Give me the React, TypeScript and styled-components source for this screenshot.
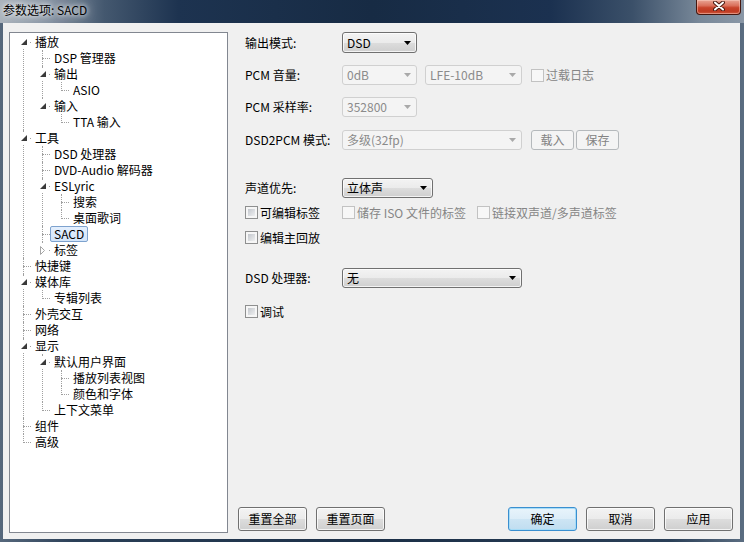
import React from 'react';
import styled, { createGlobalStyle, css } from 'styled-components';

const FONT = `"Noto Sans CJK SC", "Liberation Sans", sans-serif`;

const GlobalStyle = createGlobalStyle`
  html, body { margin: 0; padding: 0; width: 744px; height: 542px; overflow: hidden; }
  body { font-family: ${FONT}; font-size: 12px; }
  * { box-sizing: border-box; }
`;

const Window = styled.div`
  width: 744px;
  height: 542px;
  display: flex;
  flex-direction: column;
  background: linear-gradient(90deg, #56687c 0%, #2a3f57 10%, #1b2f47 50%, #2a3f57 90%, #5b6d81 100%);
`;

const TitleBar = styled.div`
  height: 23px;
  flex: none;
  display: flex;
  justify-content: space-between;
  align-items: flex-start;
  padding: 0 3px;
  background: linear-gradient(90deg, #a9b2bb 0%, #8390a0 7%, #44586f 14%, #1d3350 24%, #172b44 50%, #1b3150 74%, #3b5069 85%, #788899 94%, #8a97a6 100%);
`;

const Title = styled.span`
  font: 12px/19px ${FONT};
  color: #000;
  text-shadow: 0 0 4px rgba(255, 255, 255, 0.95), 0 0 8px rgba(255, 255, 255, 0.8), 0 0 14px rgba(255, 255, 255, 0.6);
`;

const CloseButton = styled.div`
  width: 45px;
  height: 15px;
  border: 1px solid #45170f;
  border-top: none;
  border-radius: 0 0 4px 4px;
  background: linear-gradient(#e9a595 0%, #da705c 40%, #c8442c 55%, #bf3a22 80%, #d05b40 100%);
  box-shadow: inset 0 0 0 1px rgba(255, 215, 205, 0.45);
  display: flex;
  justify-content: center;
  padding-top: 1px;
`;

const Client = styled.div`
  flex: 1;
  margin: 0 4px 3px 3px;
  background: #f0f0f0;
  display: flex;
  gap: 10px;
  padding: 9px 7px 6px 6px;
`;

/* ---------------- Tree ---------------- */

const TreeBox = styled.div`
  width: 219px;
  flex: none;
  border: 1px solid #828790;
  background: #fff;
  padding-top: 1px;
  font: 12px/16px ${FONT};
  color: #000;
  overflow: hidden;
`;

const List = styled.ul<{ $root?: boolean }>`
  list-style: none;
  margin: 0;
  padding: 0 0 0 ${(p) => (p.$root ? 0 : 19)}px;
`;

const Item = styled.li<{ $first?: boolean; $last?: boolean }>`
  position: relative;
  &::before {
    content: '';
    position: absolute;
    left: 13px;
    width: 0;
    top: ${(p) => (p.$first ? 8 : 0)}px;
    ${(p) => (p.$last ? css`height: ${p.$first ? 1 : 9}px;` : css`bottom: 0;`)}
    border-left: 1px dotted #a0a0a0;
  }
`;

const Row = styled.div`
  position: relative;
  height: 16px;
  display: flex;
  align-items: center;
  padding-left: 21px;
  white-space: nowrap;
  &::after {
    content: '';
    position: absolute;
    left: 13px;
    top: 8px;
    width: 8px;
    border-top: 1px dotted #a0a0a0;
  }
`;

const Expander = styled.span`
  position: absolute;
  left: 8px;
  top: 2px;
  width: 11px;
  height: 12px;
  background: #fff;
  z-index: 1;
  display: flex;
  align-items: center;
  justify-content: center;
`;

const NodeLabel = styled.span<{ $selected?: boolean }>`
  height: 16px;
  padding: 0 3px;
  border: 1px solid transparent;
  border-radius: 2px;
  line-height: 14px;
  ${(p) =>
    p.$selected &&
    css`
      border-color: #7da2ce;
      background: linear-gradient(#e4effd, #d3e5fa);
    `}
`;

type TreeNode = { label: string; children?: TreeNode[]; selected?: boolean; collapsed?: boolean };

const treeData: TreeNode[] = [
  {
    label: '播放',
    children: [
      { label: 'DSP 管理器' },
      { label: '输出', children: [{ label: 'ASIO' }] },
      { label: '输入', children: [{ label: 'TTA 输入' }] },
    ],
  },
  {
    label: '工具',
    children: [
      { label: 'DSD 处理器' },
      { label: 'DVD-Audio 解码器' },
      { label: 'ESLyric', children: [{ label: '搜索' }, { label: '桌面歌词' }] },
      { label: 'SACD', selected: true },
      { label: '标签', collapsed: true },
    ],
  },
  { label: '快捷键' },
  { label: '媒体库', children: [{ label: '专辑列表' }] },
  { label: '外壳交互' },
  { label: '网络' },
  {
    label: '显示',
    children: [
      { label: '默认用户界面', children: [{ label: '播放列表视图' }, { label: '颜色和字体' }] },
      { label: '上下文菜单' },
    ],
  },
  { label: '组件' },
  { label: '高级' },
];

const ExpandedGlyph = () => (
  <svg width="6" height="6" viewBox="0 0 6 6">
    <path d="M6 0 L6 6 L0 6 Z" fill="#3a3a3a" />
  </svg>
);

const CollapsedGlyph = () => (
  <svg width="5" height="9" viewBox="0 0 5 9">
    <path d="M0.5 0.5 L4.5 4.5 L0.5 8.5 Z" fill="#fff" stroke="#a6a6a6" strokeWidth="1" />
  </svg>
);

function TreeNodes({ nodes, root }: { nodes: TreeNode[]; root?: boolean }) {
  return (
    <List $root={root}>
      {nodes.map((n, i) => (
        <Item key={n.label} $first={root && i === 0} $last={i === nodes.length - 1}>
          <Row>
            {(n.children || n.collapsed) && (
              <Expander>{n.collapsed ? <CollapsedGlyph /> : <ExpandedGlyph />}</Expander>
            )}
            <NodeLabel $selected={n.selected}>{n.label}</NodeLabel>
          </Row>
          {n.children && <TreeNodes nodes={n.children} />}
        </Item>
      ))}
    </List>
  );
}

/* ---------------- Page ---------------- */

const Page = styled.div`
  flex: 1;
  display: flex;
  flex-direction: column;
  padding-bottom: 2px;
  font: 12px ${FONT};
  color: #000;
`;

const Form = styled.div`
  display: flex;
  flex-direction: column;
  padding-left: 7px;
`;

const FormRow = styled.div<{ $mt: number; $h: number }>`
  display: flex;
  align-items: center;
  height: ${(p) => p.$h}px;
  margin-top: ${(p) => p.$mt}px;
  white-space: nowrap;
`;

const FieldLabel = styled.span`
  width: 97px;
  flex: none;
  line-height: 16px;
`;

const Select = styled.div<{ $w: number; $disabled?: boolean; $ml?: number }>`
  width: ${(p) => p.$w}px;
  height: 100%;
  flex: none;
  margin-left: ${(p) => p.$ml ?? 0}px;
  display: flex;
  align-items: center;
  justify-content: space-between;
  padding: 0 5px 0 4px;
  border-radius: 3px;
  line-height: 16px;
  ${(p) =>
    p.$disabled
      ? css`
          border: 1px solid #d0d0d0;
          background: #f4f4f4;
          color: #8b8b8b;
        `
      : css`
          border: 1px solid #707070;
          background: linear-gradient(#f3f3f3 0%, #ebebeb 50%, #dddddd 50%, #cfcfcf 100%);
          box-shadow: inset 0 0 0 1px rgba(255, 255, 255, 0.75);
          color: #000;
        `}
`;

const Arrow = ({ disabled }: { disabled?: boolean }) => (
  <svg width="7" height="4" viewBox="0 0 7 4">
    <path d="M0 0 L7 0 L3.5 4 Z" fill={disabled ? '#a9a9a9' : '#000'} />
  </svg>
);

const SmallButton = styled.div<{ $ml: number }>`
  width: 43px;
  height: 100%;
  flex: none;
  margin-left: ${(p) => p.$ml}px;
  display: flex;
  align-items: center;
  justify-content: center;
  border: 1px solid #b5b9bc;
  border-radius: 3px;
  background: #f4f4f4;
  color: #838383;
  line-height: 16px;
`;

const Check = styled.label<{ $w?: number; $ml?: number; $disabled?: boolean }>`
  display: flex;
  align-items: center;
  gap: 2px;
  flex: none;
  ${(p) => p.$w !== undefined && css`width: ${p.$w}px;`}
  margin-left: ${(p) => p.$ml ?? 0}px;
  line-height: 16px;
  color: ${(p) => (p.$disabled ? '#858585' : '#000')};
`;

const Box = styled.span<{ $disabled?: boolean }>`
  width: 13px;
  height: 13px;
  flex: none;
  padding: 2px;
  ${(p) =>
    p.$disabled
      ? css`
          border: 1px solid #c2c2c2;
          background: #f7f7f7;
        `
      : css`
          border: 1px solid #8e8f8f;
          background: linear-gradient(135deg, #c3c7cd, #eeeff0) content-box, linear-gradient(#f6f6f6, #f6f6f6) padding-box;
        `}
`;

const ButtonBar = styled.div`
  margin-top: auto;
  display: flex;
  gap: 9px;
  height: 24px;
`;

const Spacer = styled.div`
  flex: 1;
`;

const Button = styled.div<{ $default?: boolean }>`
  width: 69px;
  height: 24px;
  flex: none;
  display: flex;
  align-items: center;
  justify-content: center;
  border-radius: 3px;
  line-height: 16px;
  color: #000;
  ${(p) =>
    p.$default
      ? css`
          border: 1px solid #3a8fd0;
          background: linear-gradient(#e8f4fb 0%, #dcedf8 50%, #cde5f4 50%, #c0ddf0 100%);
          box-shadow: inset 0 0 0 1px #a6dcf7;
        `
      : css`
          border: 1px solid #707070;
          background: linear-gradient(#f3f3f3 0%, #ebebeb 50%, #dddddd 50%, #cfcfcf 100%);
          box-shadow: inset 0 0 0 1px rgba(255, 255, 255, 0.75);
        `}
`;

export default function App() {
  return (
    <>
      <GlobalStyle />
      <Window>
        <TitleBar>
          <Title>参数选项: SACD</Title>
          <CloseButton>
            <svg width="12" height="10" viewBox="0 0 12 10">
              <path d="M2 1.5 L10 8.5 M10 1.5 L2 8.5" stroke="#4a1a12" strokeWidth="4" strokeLinecap="round" />
              <path d="M2 1.5 L10 8.5 M10 1.5 L2 8.5" stroke="#fff" strokeWidth="2" strokeLinecap="round" />
            </svg>
          </CloseButton>
        </TitleBar>
        <Client>
          <TreeBox>
            <TreeNodes nodes={treeData} root />
          </TreeBox>
          <Page>
            <Form>
              <FormRow $mt={0} $h={21}>
                <FieldLabel>输出模式:</FieldLabel>
                <Select $w={75}>
                  <span>DSD</span>
                  <Arrow />
                </Select>
              </FormRow>
              <FormRow $mt={12} $h={20}>
                <FieldLabel>PCM 音量:</FieldLabel>
                <Select $w={75} $disabled>
                  <span>0dB</span>
                  <Arrow disabled />
                </Select>
                <Select $w={97} $disabled $ml={8}>
                  <span>LFE-10dB</span>
                  <Arrow disabled />
                </Select>
                <Check $ml={9} $disabled>
                  <Box $disabled />
                  过载日志
                </Check>
              </FormRow>
              <FormRow $mt={12} $h={20}>
                <FieldLabel>PCM 采样率:</FieldLabel>
                <Select $w={75} $disabled>
                  <span>352800</span>
                  <Arrow disabled />
                </Select>
              </FormRow>
              <FormRow $mt={13} $h={20}>
                <FieldLabel>DSD2PCM 模式:</FieldLabel>
                <Select $w={180} $disabled>
                  <span>多级(32fp)</span>
                  <Arrow disabled />
                </Select>
                <SmallButton $ml={9}>载入</SmallButton>
                <SmallButton $ml={2}>保存</SmallButton>
              </FormRow>
              <FormRow $mt={28} $h={20}>
                <FieldLabel>声道优先:</FieldLabel>
                <Select $w={91}>
                  <span>立体声</span>
                  <Arrow />
                </Select>
              </FormRow>
              <FormRow $mt={6} $h={17}>
                <Check $w={97}>
                  <Box />
                  可编辑标签
                </Check>
                <Check $w={135} $disabled>
                  <Box $disabled />
                  储存 ISO 文件的标签
                </Check>
                <Check $disabled>
                  <Box $disabled />
                  链接双声道/多声道标签
                </Check>
              </FormRow>
              <FormRow $mt={8} $h={17}>
                <Check>
                  <Box />
                  编辑主回放
                </Check>
              </FormRow>
              <FormRow $mt={22} $h={20}>
                <FieldLabel>DSD 处理器:</FieldLabel>
                <Select $w={180}>
                  <span>无</span>
                  <Arrow />
                </Select>
              </FormRow>
              <FormRow $mt={15} $h={17}>
                <Check>
                  <Box />
                  调试
                </Check>
              </FormRow>
            </Form>
            <ButtonBar>
              <Button>重置全部</Button>
              <Button>重置页面</Button>
              <Spacer />
              <Button $default>确定</Button>
              <Button>取消</Button>
              <Button>应用</Button>
            </ButtonBar>
          </Page>
        </Client>
      </Window>
    </>
  );
}
